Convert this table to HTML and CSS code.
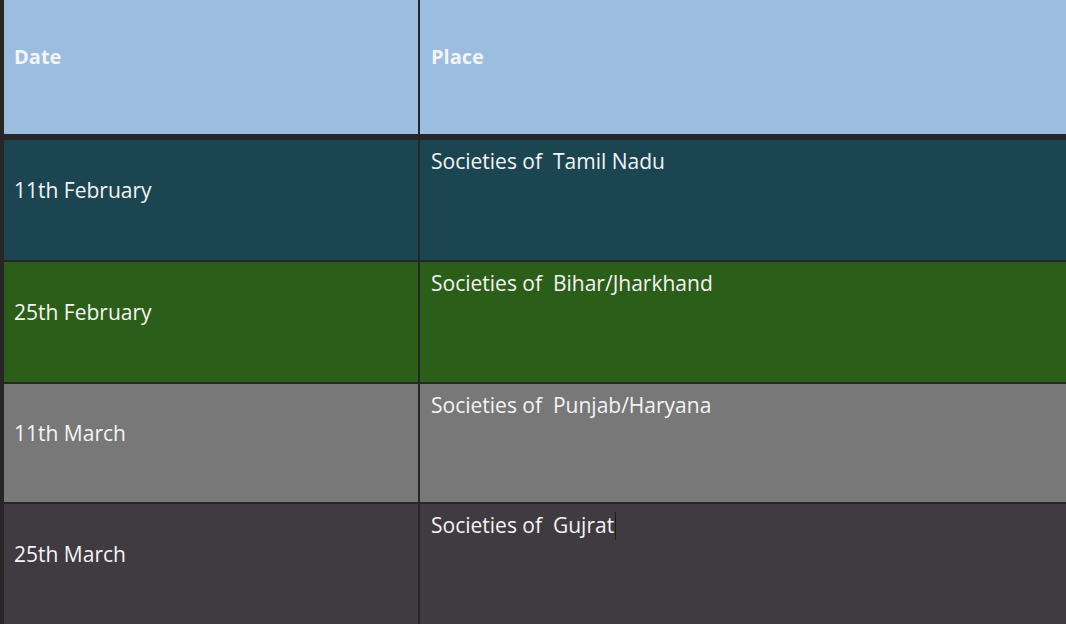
FILE: index.html
```html
<!DOCTYPE html>
<html lang="en">
<head>
  <meta charset="UTF-8">
  <title>Schedule</title>
  <link rel="stylesheet" href="styles.css">
</head>
<body>

  <div class="sheet">
    <div class="row head">
      <div class="cell date">Date</div>
      <div class="cell date">Place</div>
    </div>

    <div class="row teal">
      <div class="cell date">11th February</div>
      <div class="cell place">Societies of &nbsp;Tamil Nadu</div>
    </div>

    <div class="row green">
      <div class="cell date">25th February</div>
      <div class="cell place">Societies of &nbsp;Bihar/Jharkhand</div>
    </div>

    <div class="row grey short">
      <div class="cell date">11th March</div>
      <div class="cell place">Societies of &nbsp;Punjab/Haryana</div>
    </div>

    <div class="row plum">
      <div class="cell date">25th March</div>
      <div class="cell place">Societies of &nbsp;Gujrat<span class="caret"></span></div>
    </div>
  </div>

</body>
</html>
```

FILE: styles.css
```css
body {
  margin: 0;
  font-family: 'Open Sans', sans-serif;
  background: #262626;
  overflow: hidden;
}

.sheet {
  display: flex;
  flex-direction: column;
  gap: 2px;
  padding-left: 4px;
  height: 624px;
}

.row {
  display: grid;
  grid-template-columns: 414px 1fr;
  column-gap: 2px;
  height: 120px;
  flex-shrink: 0;
}

.row.short {
  height: 118px;
}

.cell {
  color: #f4f4f4;
  font-size: 21px;
  font-weight: 500;
  padding-left: 10px;
  padding-right: 10px;
}

.date {
  display: flex;
  align-items: center;
  padding-bottom: 20px;
}

.place {
  padding-top: 7px;
  padding-left: 11px;
}

.head {
  height: 134px;
  margin-bottom: 4px;
}

.head .cell {
  background: #9bbde0;
  font-weight: 700;
  font-size: 20px;
  padding-bottom: 22px;
}

.head .cell + .cell {
  padding-left: 11px;
}

.teal .cell { background: #1c4552; }
.green .cell { background: #2b5e18; }
.grey .cell { background: #787878; }
.plum .cell { background: #403a41; }

.caret {
  display: inline-block;
  width: 1px;
  height: 28px;
  margin-left: 1px;
  background: #1e1e1e;
  vertical-align: -7px;
}
```
